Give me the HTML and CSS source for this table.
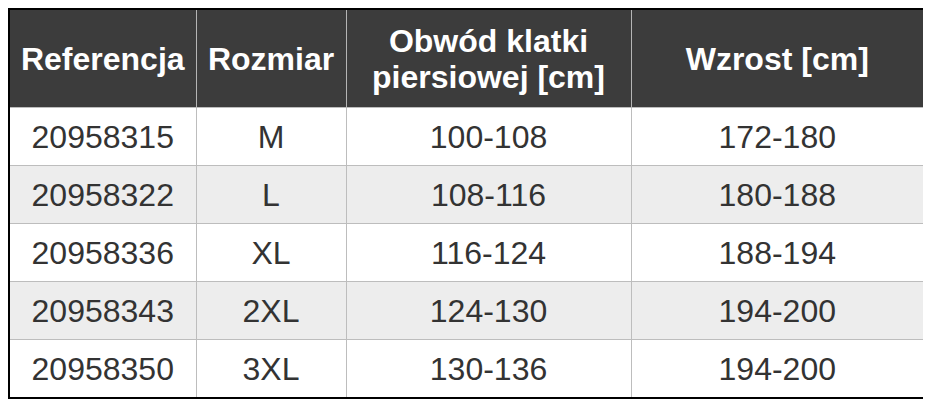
FILE: index.html
```html
<!DOCTYPE html>
<html lang="pl">
<head>
<meta charset="utf-8">
<link rel="stylesheet" href="styles.css">
</head>
<body>
<table class="sizes">
  <colgroup>
    <col class="c1"><col class="c2"><col class="c3"><col class="c4">
  </colgroup>
  <thead>
    <tr><th>Referencja</th><th>Rozmiar</th><th>Obwód klatki<br>piersiowej [cm]</th><th>Wzrost [cm]</th></tr>
  </thead>
  <tbody>
    <tr><td>20958315</td><td>M</td><td>100-108</td><td>172-180</td></tr>
    <tr class="alt"><td>20958322</td><td>L</td><td>108-116</td><td>180-188</td></tr>
    <tr><td>20958336</td><td>XL</td><td>116-124</td><td>188-194</td></tr>
    <tr class="alt"><td>20958343</td><td>2XL</td><td>124-130</td><td>194-200</td></tr>
    <tr><td>20958350</td><td>3XL</td><td>130-136</td><td>194-200</td></tr>
  </tbody>
</table>
</body>
</html>
```
FILE: styles.css
```css
html, body { background: #fff; }
body { margin: 8px; font-family: "Liberation Sans", Arial, sans-serif; }
.sizes {
  border-collapse: collapse;
  border: 2px solid #000;
  width: 917px;
  table-layout: fixed;
  font-size: 32px;
}
.c1 { width: 187px; }
.c2 { width: 150px; }
.c3 { width: 285px; }
.c4 { width: auto; }
.sizes th {
  background: #3c3c3c;
  color: #fff;
  font-weight: bold;
  height: 97px;
  padding: 0;
  line-height: 36px;
  border-left: 1px solid #b5b5b5;
  text-align: center;
}
.sizes th:first-child { border-left: none; }
.sizes td {
  height: 57px;
  padding: 0;
  text-align: center;
  color: #333;
  border: 1px solid #bdbdbd;
  line-height: 36px;
}
.sizes tr.alt td { background: #ededed; }
```
